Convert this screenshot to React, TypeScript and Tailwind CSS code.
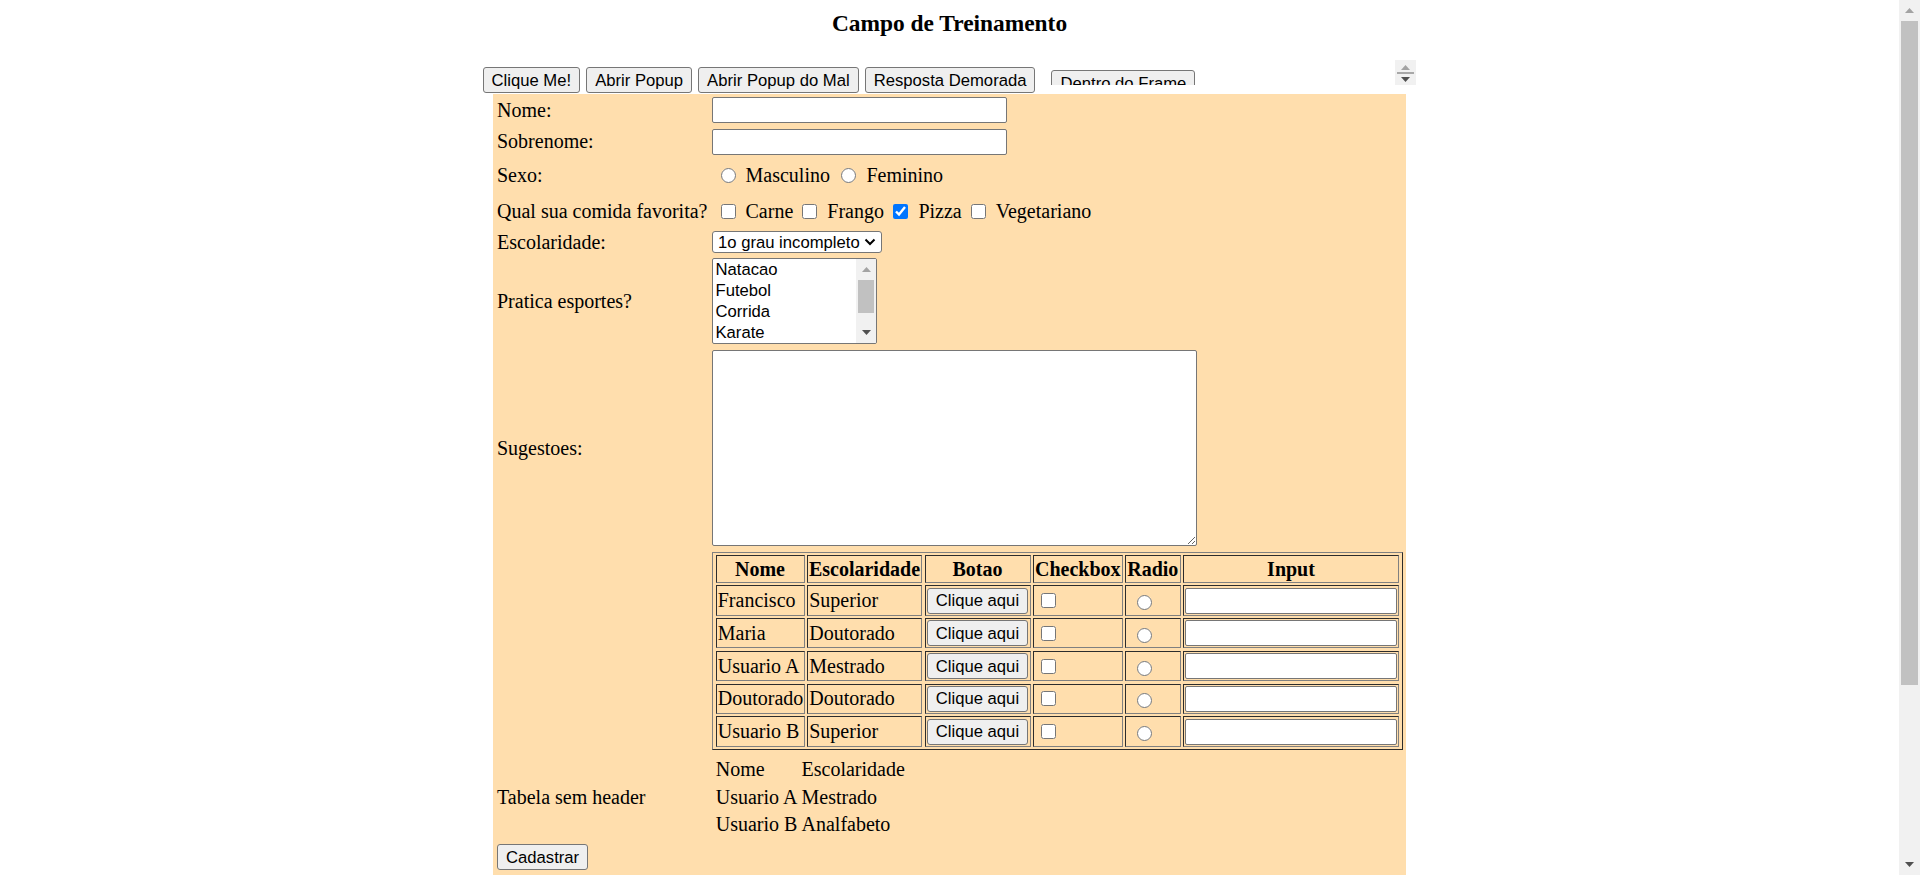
import React from "react";

const btn =
  "h-[26px] shrink-0 px-[8px] border border-[#767676] rounded-[3px] bg-[#efefef] text-[16.67px] leading-[19px] text-black font-['Liberation_Sans','Arial',sans-serif] whitespace-nowrap";

const sans = "font-['Liberation_Sans','Arial',sans-serif]";

function UpArrow({ color }: { color: string }) {
  return (
    <svg width="9" height="5" viewBox="0 0 9 5" className="block">
      <path d="M0 5 L4.5 0 L9 5 Z" fill={color} />
    </svg>
  );
}

function DownArrow({ color }: { color: string }) {
  return (
    <svg width="9" height="5" viewBox="0 0 9 5" className="block">
      <path d="M0 0 L9 0 L4.5 5 Z" fill={color} />
    </svg>
  );
}

function Frame() {
  return (
    <div className="mb-[8px] flex h-[25px] w-[375px] shrink-0 overflow-hidden bg-white">
      <div className="flex-1 pl-[10px] pt-[10px]">
        <button className={btn}>Dentro do Frame</button>
      </div>
      <div className="flex h-full w-[21px] flex-col items-center bg-[#f1f1f1]">
        <div className="mt-[5px]">
          <UpArrow color="#a3a3a3" />
        </div>
        <div className="mt-[2px] h-[2px] w-[17px] bg-[#a8a8a8]" />
        <div className="mt-[3px]">
          <DownArrow color="#505050" />
        </div>
      </div>
    </div>
  );
}

function Label({ children }: { children?: React.ReactNode }) {
  return <div className="w-[215px] shrink-0 text-[20px] leading-[23px]">{children}</div>;
}

const cell =
  "flex items-center border border-t-[#2c2c2c] border-l-[#2c2c2c] border-b-[#808080] border-r-[#808080] px-[1.25px] text-[20px] leading-[23px] whitespace-nowrap";
const headCell =
  "flex items-center justify-center border border-t-[#2c2c2c] border-l-[#2c2c2c] border-b-[#808080] border-r-[#808080] px-[1.25px] text-[20px] leading-[23px] font-bold whitespace-nowrap";

const people = [
  ["Francisco", "Superior"],
  ["Maria", "Doutorado"],
  ["Usuario A", "Mestrado"],
  ["Doutorado", "Doutorado"],
  ["Usuario B", "Superior"],
];

function UsersTable() {
  return (
    <div className="grid grid-cols-[89px_115px_106px_89.5px_55.5px_216px] grid-rows-[27.5px_repeat(5,30.25px)] gap-[2.5px] border border-t-[#808080] border-l-[#808080] border-b-[#2c2c2c] border-r-[#2c2c2c] p-[2.5px]">
      <div className={headCell}>Nome</div>
      <div className={headCell}>Escolaridade</div>
      <div className={headCell}>Botao</div>
      <div className={headCell}>Checkbox</div>
      <div className={headCell}>Radio</div>
      <div className={headCell}>Input</div>
      {people.map(([n, e], i) => (
        <React.Fragment key={i}>
          <div className={cell}>{n}</div>
          <div className={cell}>{e}</div>
          <div className={cell}>
            <button className={btn}>Clique aqui</button>
          </div>
          <div className={cell}>
            <input type="checkbox" className="m-0 ml-[5.5px] h-[15px] w-[15px]" />
          </div>
          <div className={cell}>
            <input type="radio" name={"r" + i} className="m-0 ml-[9.5px] mt-[4px] h-[15px] w-[15px]" />
          </div>
          <div className={cell}>
            <input
              type="text"
              className="h-[26px] w-[211.5px] rounded-[2px] border border-[#767676] bg-white"
            />
          </div>
        </React.Fragment>
      ))}
    </div>
  );
}

function PlainTable() {
  const rows = [
    ["Nome", "Escolaridade"],
    ["Usuario A", "Mestrado"],
    ["Usuario B", "Analfabeto"],
  ];
  return (
    <div className="grid grid-cols-[83.25px_auto] gap-[2.5px] p-[2.5px] text-[20px] leading-[23px]">
      {rows.map(([a, b], i) => (
        <React.Fragment key={i}>
          <div className="flex h-[24.7px] items-center whitespace-nowrap px-[1.25px]">{a}</div>
          <div className="flex h-[24.7px] items-center whitespace-nowrap px-[1.25px]">{b}</div>
        </React.Fragment>
      ))}
    </div>
  );
}

function ListBox() {
  const items = ["Natacao", "Futebol", "Corrida", "Karate"];
  return (
    <div className="flex h-[86px] w-[165px] overflow-hidden rounded-[2px] border border-[#767676] bg-white">
      <div className={"flex-1 pl-[2.5px] text-[16.67px] " + sans}>
        {items.map((it) => (
          <div key={it} className="flex h-[21px] items-center leading-[19px]">
            {it}
          </div>
        ))}
      </div>
      <div className="flex h-full w-[20px] flex-col items-center bg-[#f1f1f1]">
        <div className="flex h-[21px] items-center">
          <UpArrow color="#a3a3a3" />
        </div>
        <div className="h-[33px] w-[16px] bg-[#c1c1c1]" />
        <div className="flex-1" />
        <div className="flex h-[21px] items-center">
          <DownArrow color="#505050" />
        </div>
      </div>
    </div>
  );
}

function PageScrollbar() {
  return (
    <div className="flex h-full w-[21px] shrink-0 flex-col items-center bg-[#f1f1f1]">
      <div className="flex h-[21px] items-center">
        <UpArrow color="#a3a3a3" />
      </div>
      <div className="h-[664px] w-[17px] bg-[#c1c1c1]" />
      <div className="flex-1" />
      <div className="flex h-[21px] items-center">
        <DownArrow color="#505050" />
      </div>
    </div>
  );
}

export default function App() {
  return (
    <div className="flex h-[875px] w-full overflow-hidden bg-white text-black font-['Liberation_Serif','Times_New_Roman',serif]">
      <div className="flex min-w-0 flex-1 flex-col items-center">
        <h3 className="pt-[10px] text-[23.4px] font-bold leading-[27px]">Campo de Treinamento</h3>
        <div className="mt-[23px] flex items-end gap-[6px]">
          <button className={btn}>Clique Me!</button>
          <button className={btn}>Abrir Popup</button>
          <button className={btn}>Abrir Popup do Mal</button>
          <button className={btn}>Resposta Demorada</button>
          <Frame />
        </div>
        <div className="mt-[1px] flex w-[913px] flex-1 flex-col bg-[#ffdead] px-[4px]">
          <div className="flex h-[32px] items-center">
            <Label>Nome:</Label>
            <input type="text" className="h-[26px] w-[295px] rounded-[2px] border border-[#767676] bg-white" />
          </div>
          <div className="flex h-[31px] items-center">
            <Label>Sobrenome:</Label>
            <input type="text" className="h-[26px] w-[295px] rounded-[2px] border border-[#767676] bg-white" />
          </div>
          <div className="flex h-[36px] items-center">
            <Label>Sexo:</Label>
            <div className="flex items-center text-[20px] leading-[23px]">
              <input type="radio" name="sexo" className="m-0 ml-[8.5px] h-[15px] w-[15px]" />
              <span className="ml-[10px]">Masculino</span>
              <input type="radio" name="sexo" className="m-0 ml-[11.5px] h-[15px] w-[15px]" />
              <span className="ml-[10px]">Feminino</span>
            </div>
          </div>
          <div className="flex h-[36px] items-center">
            <Label>Qual sua comida favorita?</Label>
            <div className="flex items-center text-[20px] leading-[23px]">
              <input type="checkbox" className="m-0 ml-[8.5px] h-[15px] w-[15px]" />
              <span className="ml-[10px]">Carne</span>
              <input type="checkbox" className="m-0 ml-[9px] h-[15px] w-[15px]" />
              <span className="ml-[10px]">Frango</span>
              <input type="checkbox" defaultChecked className="m-0 ml-[9.5px] h-[15px] w-[15px]" />
              <span className="ml-[10px]">Pizza</span>
              <input type="checkbox" className="m-0 ml-[9.5px] h-[15px] w-[15px]" />
              <span className="ml-[9.5px]">Vegetariano</span>
            </div>
          </div>
          <div className="flex h-[26.5px] items-center">
            <Label>Escolaridade:</Label>
            <div
              className={
                "flex h-[22px] w-[170px] items-center justify-between rounded-[3px] border border-[#767676] bg-white pl-[5px] pr-[5px] text-[16.67px] leading-[19px] " +
                sans
              }
            >
              <span className="whitespace-nowrap">1o grau incompleto</span>
              <svg width="12" height="8" viewBox="0 0 12 8" className="block shrink-0">
                <path d="M1.5 1.5 L6 6 L10.5 1.5" fill="none" stroke="#000" strokeWidth="2" />
              </svg>
            </div>
          </div>
          <div className="flex h-[91.5px] items-center">
            <Label>Pratica esportes?</Label>
            <ListBox />
          </div>
          <div className="flex h-[202px] items-center">
            <Label>Sugestoes:</Label>
            <textarea className="block h-[196px] w-[485px] resize rounded-[2px] border border-[#767676] bg-white" />
          </div>
          <div className="flex h-[204px] items-center">
            <Label />
            <UsersTable />
          </div>
          <div className="flex h-[88px] items-center">
            <Label>Tabela sem header</Label>
            <PlainTable />
          </div>
          <div className="flex h-[32px] items-center">
            <button className={btn}>Cadastrar</button>
          </div>
        </div>
      </div>
      <PageScrollbar />
    </div>
  );
}
